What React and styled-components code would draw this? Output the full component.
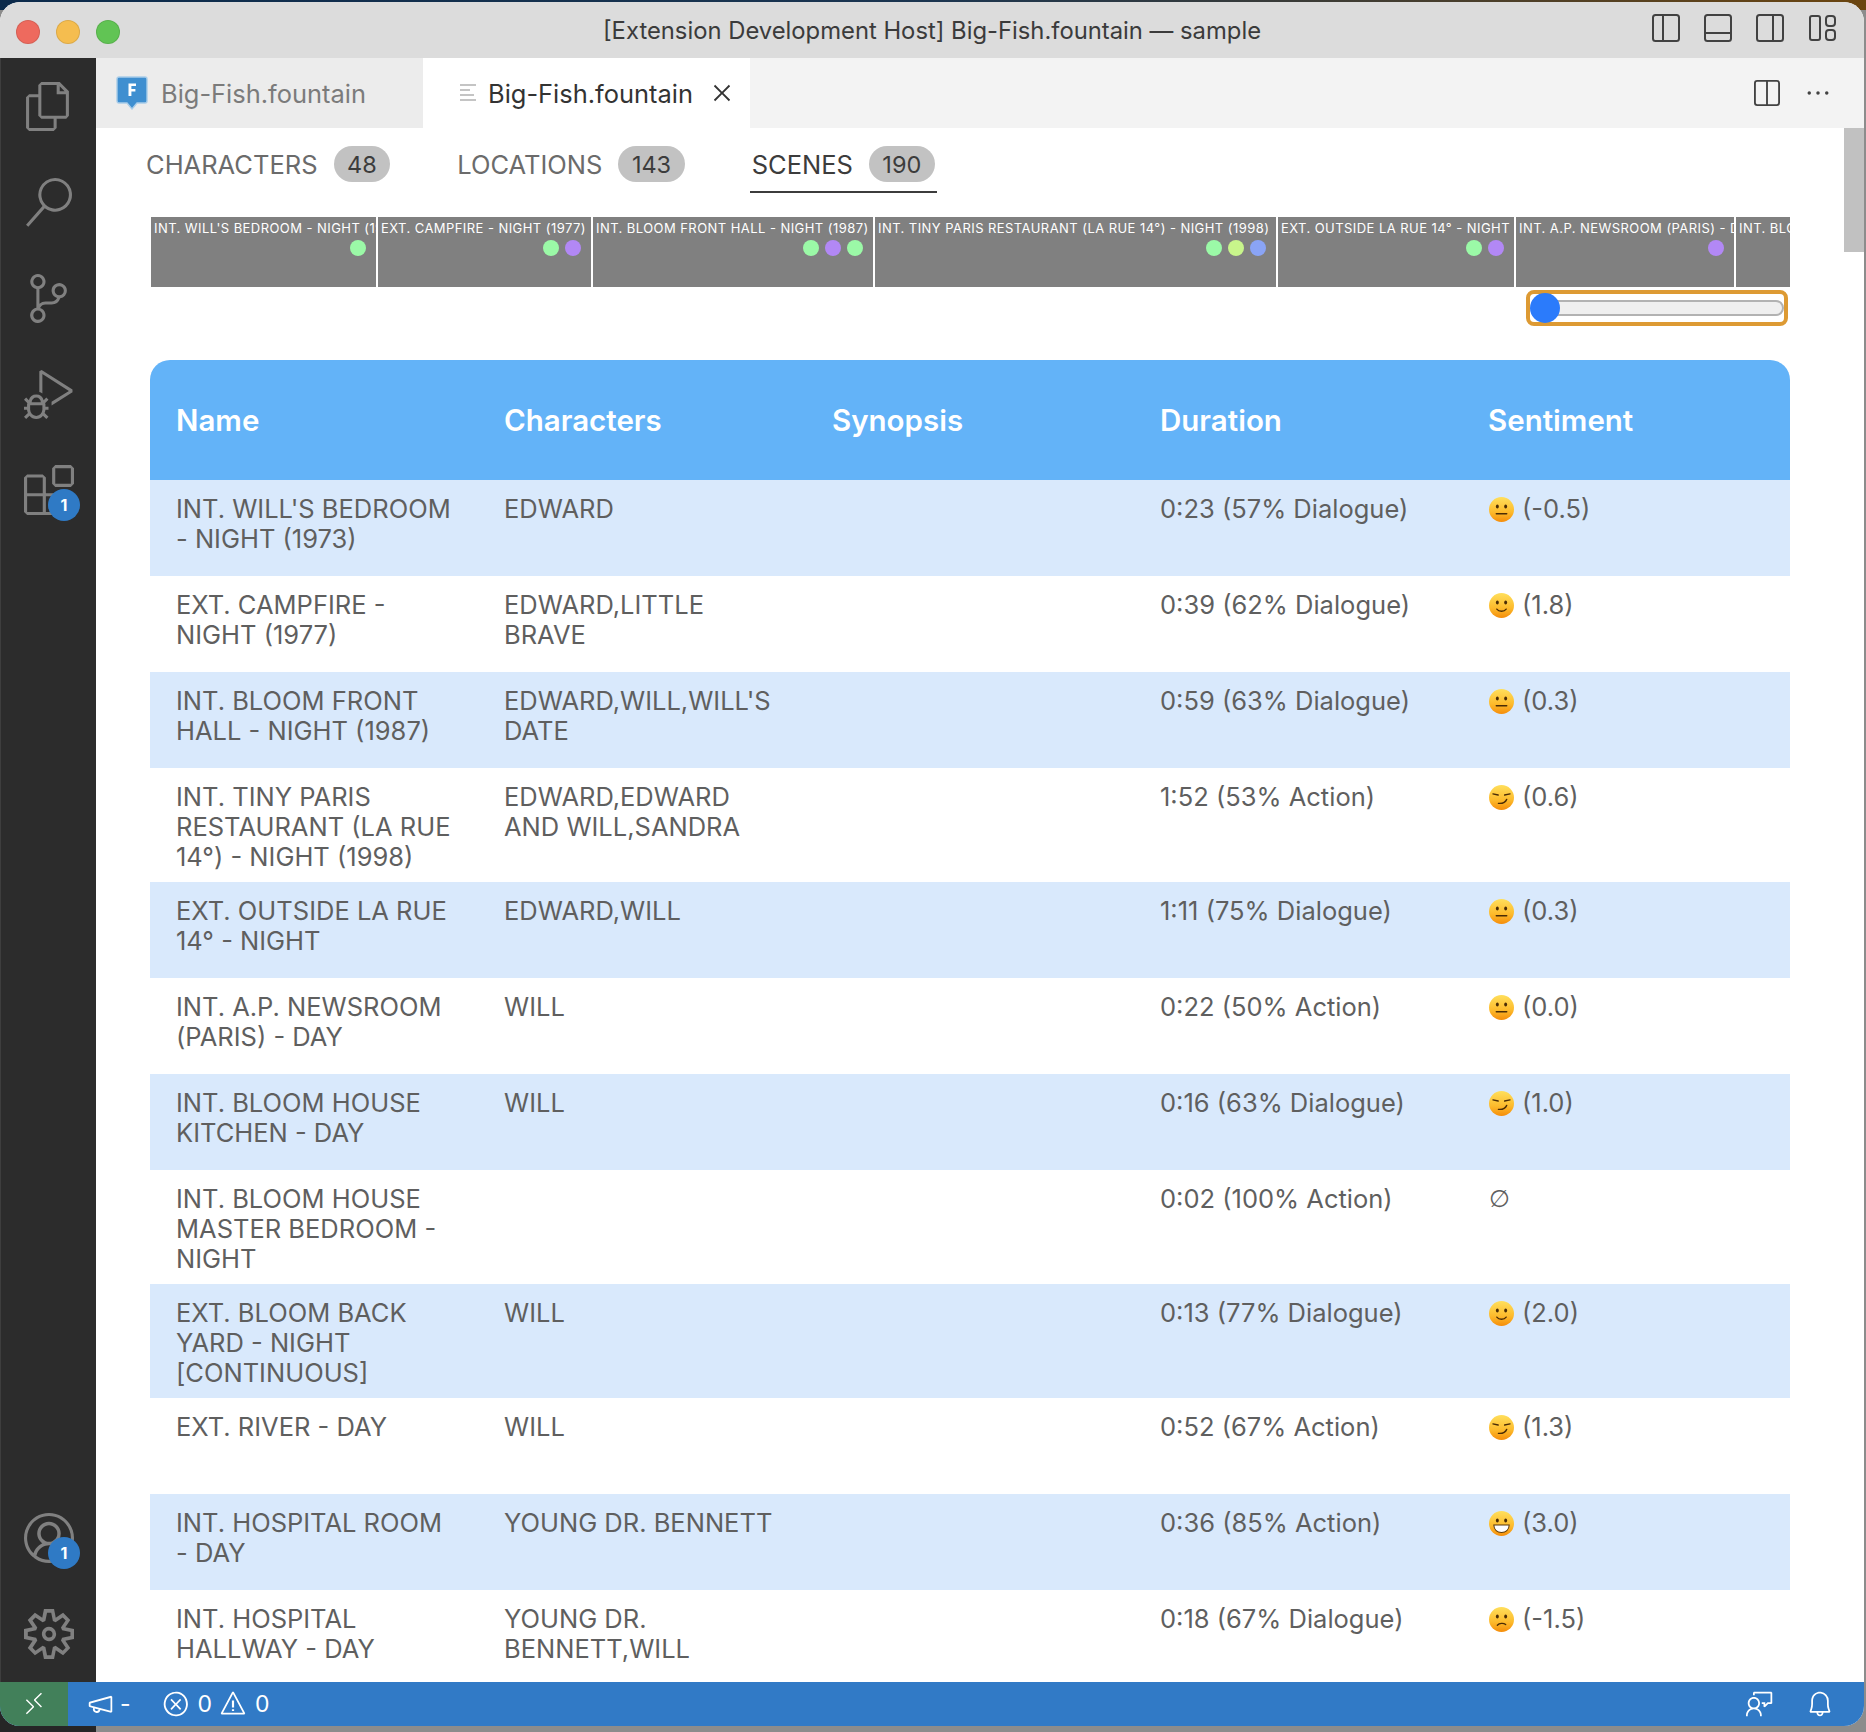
import React from "react";
import styled, { createGlobalStyle } from "styled-components";
import {
  VscFiles,
  VscSearch,
  VscSourceControl,
  VscDebugAlt,
  VscExtensions,
  VscAccount,
  VscSettingsGear,
  VscRemote,
  VscError,
  VscWarning,
  VscBell,
  VscFeedback,
  VscMegaphone,
  VscClose,
  VscEllipsis,
} from "react-icons/vsc";

const GlobalStyle = createGlobalStyle`
  html, body {
    margin: 0;
    padding: 0;
    background: #8c8c8c;
  }
  * {
    box-sizing: border-box;
  }
`;

const Desktop = styled.div`
  width: 1866px;
  height: 1732px;
  padding: 2px 2px 6px 0;
  overflow: hidden;
  font-family: Inter, "Liberation Sans", sans-serif;
  background:
    linear-gradient(90deg, #0b2a4b 0%, #1b3550 50%, #6b4510 100%) top / 100% 10px no-repeat,
    linear-gradient(90deg, #262626 0, #262626 96px, #8c8c8c 96px) bottom / 100% 30px no-repeat,
    #8c8c8c;
`;

const Window = styled.div`
  height: 100%;
  border-radius: 20px;
  overflow: hidden;
  display: flex;
  flex-direction: column;
  background: #fff;
`;

const TitleBar = styled.div`
  position: relative;
  flex: 0 0 56px;
  display: flex;
  align-items: center;
  justify-content: space-between;
  padding: 0 28px 0 16px;
  background: #dcdcdc;
`;

const Lights = styled.div`
  display: flex;
  gap: 16px;
  margin-top: 4px;
`;

const Light = styled.span`
  width: 24px;
  height: 24px;
  border-radius: 50%;
  background: ${(p) => p.$color};
  border: 1px solid rgba(0, 0, 0, 0.1);
`;

const Title = styled.div`
  position: absolute;
  left: 0;
  right: 0;
  text-align: center;
  font-size: 23.8px;
  color: #3b3b3b;
  pointer-events: none;
`;

const TitleIcons = styled.div`
  display: flex;
  gap: 24px;
  margin-top: -4px;
  color: #424242;
`;

const Workbench = styled.div`
  flex: 1;
  min-height: 0;
  display: flex;
`;

const ActivityBar = styled.div`
  flex: 0 0 96px;
  display: flex;
  flex-direction: column;
  justify-content: space-between;
  background: #2c2c2c;
  border-left: 1px solid #3e3e3e;
`;

const ActivityGroup = styled.div`
  display: flex;
  flex-direction: column;
`;

const ActivityItem = styled.div`
  position: relative;
  width: 95px;
  height: 96px;
  display: flex;
  align-items: center;
  justify-content: center;
  color: #808080;
`;

const Badge = styled.span`
  position: absolute;
  left: 47px;
  top: 47px;
  width: 32px;
  height: 32px;
  border-radius: 50%;
  display: flex;
  align-items: center;
  justify-content: center;
  background: #2f7ac5;
  color: #fff;
  font-size: 16px;
  font-weight: 700;
`;

const Editor = styled.div`
  flex: 1;
  min-width: 0;
  display: flex;
  flex-direction: column;
`;

const TabStrip = styled.div`
  flex: 0 0 70px;
  display: flex;
  align-items: center;
  background: #f3f3f3;
`;

const EditorTab = styled.div`
  width: 327px;
  height: 100%;
  display: flex;
  align-items: center;
  padding-left: ${(p) => (p.$active ? "37px" : "20px")};
  background: ${(p) => (p.$active ? "#fff" : "#ececec")};
  color: ${(p) => (p.$active ? "#333" : "#7b7b7b")};
  font-size: 25.45px;
`;

const TabLabel = styled.span`
  margin-left: ${(p) => p.$gap}px;
  padding-top: 1px;
`;

const TabClose = styled(VscClose)`
  display: block;
  margin-left: 14px;
`;

const TabActions = styled.div`
  margin-left: auto;
  display: flex;
  align-items: center;
  gap: 24px;
  padding-right: 32px;
  color: #424242;
`;

const Content = styled.div`
  position: relative;
  flex: 1;
  min-height: 0;
  overflow: hidden;
  padding: 0 74px 0 54px;
`;

const ScrollThumb = styled.div`
  position: absolute;
  top: 0;
  right: 0;
  width: 20px;
  height: 124px;
  background: #c1c1c1;
`;

const TabNav = styled.div`
  display: flex;
  margin-left: -6px;
  gap: 63px;
`;

const NavItem = styled.div`
  display: flex;
  align-items: center;
  gap: 16px;
  padding: 18px 2px 9px;
  border-bottom: 2px solid ${(p) => (p.$active ? "#3c3c3c" : "transparent")};
  color: ${(p) => (p.$active ? "#3c3c3c" : "#6b6b6b")};
  font-size: 25.5px;
`;

const Pill = styled.span`
  height: 36px;
  min-width: 56px;
  padding: 0 13.5px;
  border-radius: 18px;
  display: flex;
  align-items: center;
  justify-content: center;
  background: #c2c2c2;
  color: #3c3c3c;
  font-size: 23.5px;
`;

const Timeline = styled.div`
  margin-top: 24px;
  display: flex;
  gap: 2px;
  margin-left: 1px;
`;

const Segment = styled.div`
  flex: 0 0 ${(p) => p.$width}px;
  height: 70px;
  overflow: hidden;
  padding: 3px 0 0 3px;
  background: #808080;
`;

const SegmentLabel = styled.div`
  height: 17px;
  line-height: 17px;
  white-space: nowrap;
  overflow: hidden;
  color: #fff;
  font-size: 13px;
  letter-spacing: 0.44px;
`;

const Dots = styled.div`
  display: flex;
  justify-content: flex-end;
  gap: 6px;
  padding-right: 10px;
  margin-top: 3px;
`;

const Dot = styled.span`
  width: 16px;
  height: 16px;
  border-radius: 50%;
  background: ${(p) => p.$color};
`;

const SliderRow = styled.div`
  display: flex;
  justify-content: flex-end;
  margin-top: 3px;
  padding-right: 2px;
`;

const SliderFocus = styled.div`
  position: relative;
  width: 262px;
  height: 36px;
  padding: 6px 0 6px 4px;
  border: 4px solid #dd9a33;
  border-radius: 8px;
`;

const SliderTrack = styled.div`
  height: 100%;
  border: 2px solid #b2b2b2;
  border-radius: 9px;
  background: #efefef;
`;

const SliderThumb = styled.span`
  position: absolute;
  left: 0;
  top: -1px;
  width: 30px;
  height: 30px;
  border-radius: 50%;
  background: #2b7bfb;
`;

const Table = styled.table`
  width: 1640px;
  margin-top: 34px;
  border-collapse: collapse;
  table-layout: fixed;
`;

const HeadRow = styled.tr`
  height: 120px;
  background: #63b3f8;
`;

const HeadCell = styled.th`
  padding: 0 26px;
  text-align: left;
  color: #fff;
  font-size: 29.5px;
  font-weight: 600;

  &:first-child {
    border-top-left-radius: 20px;
  }
  &:last-child {
    border-top-right-radius: 20px;
  }
`;

const Row = styled.tr`
  height: 96px;
  background: ${(p) => (p.$striped ? "#d9e9fc" : "#fff")};
`;

const Cell = styled.td`
  padding: 14px 26px 10px;
  vertical-align: top;
  color: #5f5f5f;
  font-size: 25.5px;
  line-height: 30px;
`;

const Sentiment = styled.div`
  display: flex;
  align-items: center;
  gap: 8px;
  height: 30px;
  margin-left: 1px;
`;

const NoSentiment = styled.span`
  font-family: "DejaVu Sans", sans-serif;
  font-size: 24px;
  font-style: italic;
`;

const StatusBar = styled.div`
  flex: 0 0 44px;
  display: flex;
  align-items: center;
  background: #317ac6;
  color: #fff;
  font-size: 23px;
`;

const RemoteBox = styled.div`
  width: 68px;
  height: 100%;
  display: flex;
  align-items: center;
  justify-content: center;
  background: #42805a;
`;

const StatusItem = styled.div`
  display: flex;
  align-items: center;
  gap: ${(p) => p.$gap}px;
  margin-left: ${(p) => p.$left}px;
`;

const StatusRight = styled.div`
  margin-left: auto;
  display: flex;
  align-items: center;
  gap: 32px;
  padding-right: 30px;
`;

const PanelIcon = ({ kind, size = 28 }) => (
  <svg width={size} height={size} viewBox="0 0 28 28" fill="none" stroke="currentColor" strokeWidth="2">
    <rect x="1" y="1" width="26" height="26" rx="2.5" />
    {kind === "left" && <path d="M11 1V27" />}
    {kind === "right" && <path d="M17 1V27" />}
    {kind === "bottom" && <path d="M1 19H27" />}
    {kind === "split" && <path d="M14 1V27" />}
  </svg>
);

const CustomizeIcon = () => (
  <svg width="28" height="28" viewBox="0 0 28 28" fill="none" stroke="currentColor" strokeWidth="2">
    <rect x="2" y="2" width="10" height="24" rx="2" />
    <rect x="18" y="2" width="9" height="10" rx="3" />
    <rect x="18" y="16" width="9" height="10" rx="3" />
  </svg>
);

const FountainIcon = () => (
  <svg width="32" height="34" viewBox="0 0 32 34">
    <path d="M3 1H29a2 2 0 0 1 2 2V25a2 2 0 0 1-2 2H21L16 33L11 27H3a2 2 0 0 1-2-2V3a2 2 0 0 1 2-2Z" fill="#3f8fd0" stroke="#a9cde9" strokeWidth="1.4" />
    <path d="M12.5 7.5H20V10H15.4V13H19.4V15.5H15.4V20H12.5Z" fill="#fff" />
  </svg>
);

const OutlineIcon = () => (
  <svg width="16" height="28" viewBox="0 0 16 28" stroke="#c4c4c4" strokeWidth="2">
    <path d="M0 6H16M0 11H10M0 16H14M0 21H16" />
  </svg>
);

const Face = ({ kind, id }) => (
  <svg width="25" height="25" viewBox="0 0 24 24">
    <defs>
      <linearGradient id={id} x1="0" y1="0" x2="0" y2="1">
        <stop offset="0" stopColor="#ffdf5c" />
        <stop offset="0.6" stopColor="#fdbb2c" />
        <stop offset="1" stopColor="#f58d0a" />
      </linearGradient>
    </defs>
    <circle cx="12" cy="12" r="12" fill={`url(#${id})`} />
    {kind === "smirk" ? (
      <g fill="none" stroke="#4a2c05" strokeWidth="1.3" strokeLinecap="round">
        <path d="M3.8 8.6L8.8 9.6M15 9.6L20.2 8.6" />
        <path d="M9 17.6C13 18 15.8 16.6 17 13.8" />
      </g>
    ) : (
      <g fill="#4a2c05">
        <ellipse cx="8" cy="9.2" rx="1.4" ry="1.9" />
        <ellipse cx="16" cy="9.2" rx="1.4" ry="1.9" />
      </g>
    )}
    {kind === "neutral" && <path d="M7 16H17" stroke="#4a2c05" strokeWidth="1.4" strokeLinecap="round" />}
    {kind === "smile" && <path d="M7.5 15.5C9.5 18.2 14.5 18.2 16.5 15.5" fill="none" stroke="#4a2c05" strokeWidth="1.3" strokeLinecap="round" />}
    {kind === "frown" && <path d="M8 17.5C10 15.3 14 15.3 16 16.8" fill="none" stroke="#4a2c05" strokeWidth="1.3" strokeLinecap="round" />}
    {kind === "grin" && <path d="M4.6 13.5H19.4C19.2 18 16 20.6 12 20.6S4.8 18 4.6 13.5Z" fill="#fff" stroke="#5b3706" strokeWidth="1" />}
  </svg>
);

const GREEN = "#9bf9a7";
const PURPLE = "#b288f5";
const LIME = "#c8f58b";
const BLUE = "#8aa4f5";

const segments = [
  { width: 225, label: "INT. WILL'S BEDROOM - NIGHT (1973)", dots: [GREEN] },
  { width: 213, label: "EXT. CAMPFIRE - NIGHT (1977)", dots: [GREEN, PURPLE] },
  { width: 280, label: "INT. BLOOM FRONT HALL - NIGHT (1987)", dots: [GREEN, PURPLE, GREEN] },
  { width: 401, label: "INT. TINY PARIS RESTAURANT (LA RUE 14°) - NIGHT (1998)", dots: [GREEN, LIME, BLUE] },
  { width: 236, label: "EXT. OUTSIDE LA RUE 14° - NIGHT", dots: [GREEN, PURPLE] },
  { width: 218, label: "INT. A.P. NEWSROOM (PARIS) - DAY", dots: [PURPLE] },
  { width: 54, label: "INT. BLOOM HOUSE KITCHEN - DAY", dots: [] },
];

const scenes = [
  { name: "INT. WILL'S BEDROOM - NIGHT (1973)", chars: "EDWARD", time: "0:23 (57% Dialogue)", face: "neutral", score: "(-0.5)" },
  { name: "EXT. CAMPFIRE - NIGHT (1977)", chars: "EDWARD,LITTLE BRAVE", time: "0:39 (62% Dialogue)", face: "smile", score: "(1.8)" },
  { name: "INT. BLOOM FRONT HALL - NIGHT (1987)", chars: "EDWARD,WILL,WILL'S DATE", time: "0:59 (63% Dialogue)", face: "neutral", score: "(0.3)" },
  { name: "INT. TINY PARIS RESTAURANT (LA RUE 14°) - NIGHT (1998)", chars: "EDWARD,EDWARD AND WILL,SANDRA", time: "1:52 (53% Action)", face: "smirk", score: "(0.6)" },
  { name: "EXT. OUTSIDE LA RUE 14° - NIGHT", chars: "EDWARD,WILL", time: "1:11 (75% Dialogue)", face: "neutral", score: "(0.3)" },
  { name: "INT. A.P. NEWSROOM (PARIS) - DAY", chars: "WILL", time: "0:22 (50% Action)", face: "neutral", score: "(0.0)" },
  { name: "INT. BLOOM HOUSE KITCHEN - DAY", chars: "WILL", time: "0:16 (63% Dialogue)", face: "smirk", score: "(1.0)" },
  { name: "INT. BLOOM HOUSE MASTER BEDROOM - NIGHT", chars: "", time: "0:02 (100% Action)" },
  { name: "EXT. BLOOM BACK YARD - NIGHT [CONTINUOUS]", chars: "WILL", time: "0:13 (77% Dialogue)", face: "smile", score: "(2.0)" },
  { name: "EXT. RIVER - DAY", chars: "WILL", time: "0:52 (67% Action)", face: "smirk", score: "(1.3)" },
  { name: "INT. HOSPITAL ROOM - DAY", chars: "YOUNG DR. BENNETT", time: "0:36 (85% Action)", face: "grin", score: "(3.0)" },
  { name: "INT. HOSPITAL HALLWAY - DAY", chars: "YOUNG DR. BENNETT,WILL", time: "0:18 (67% Dialogue)", face: "frown", score: "(-1.5)" },
];

const App = () => {
  return (
    <>
      <GlobalStyle />
      <Desktop>
        <Window>
          <TitleBar>
            <Lights>
              <Light $color="#ee6a5e" />
              <Light $color="#f5bd4f" />
              <Light $color="#61c454" />
            </Lights>
            <Title>[Extension Development Host] Big-Fish.fountain — sample</Title>
            <TitleIcons>
              <PanelIcon kind="left" />
              <PanelIcon kind="bottom" />
              <PanelIcon kind="right" />
              <CustomizeIcon />
            </TitleIcons>
          </TitleBar>
          <Workbench>
            <ActivityBar>
              <ActivityGroup>
                <ActivityItem><VscFiles size={49} /></ActivityItem>
                <ActivityItem><VscSearch size={49} /></ActivityItem>
                <ActivityItem><VscSourceControl size={49} /></ActivityItem>
                <ActivityItem><VscDebugAlt size={49} /></ActivityItem>
                <ActivityItem>
                  <VscExtensions size={50} />
                  <Badge>1</Badge>
                </ActivityItem>
              </ActivityGroup>
              <ActivityGroup>
                <ActivityItem>
                  <VscAccount size={50} />
                  <Badge>1</Badge>
                </ActivityItem>
                <ActivityItem><VscSettingsGear size={50} /></ActivityItem>
              </ActivityGroup>
            </ActivityBar>
            <Editor>
              <TabStrip>
                <EditorTab>
                  <FountainIcon />
                  <TabLabel $gap={13}>Big-Fish.fountain</TabLabel>
                </EditorTab>
                <EditorTab $active>
                  <OutlineIcon />
                  <TabLabel $gap={12}>Big-Fish.fountain</TabLabel>
                  <TabClose size={30} />
                </EditorTab>
                <TabActions>
                  <PanelIcon kind="split" size={26} />
                  <VscEllipsis size={28} />
                </TabActions>
              </TabStrip>
              <Content>
                <ScrollThumb />
                <TabNav>
                  <NavItem>CHARACTERS <Pill>48</Pill></NavItem>
                  <NavItem>LOCATIONS <Pill>143</Pill></NavItem>
                  <NavItem $active>SCENES <Pill>190</Pill></NavItem>
                </TabNav>
                <Timeline>
                  {segments.map((s) => (
                    <Segment key={s.label} $width={s.width}>
                      <SegmentLabel>{s.label}</SegmentLabel>
                      <Dots>
                        {s.dots.map((c, i) => (
                          <Dot key={i} $color={c} />
                        ))}
                      </Dots>
                    </Segment>
                  ))}
                </Timeline>
                <SliderRow>
                  <SliderFocus>
                    <SliderTrack />
                    <SliderThumb />
                  </SliderFocus>
                </SliderRow>
                <Table>
                  <thead>
                    <HeadRow>
                      <HeadCell>Name</HeadCell>
                      <HeadCell>Characters</HeadCell>
                      <HeadCell>Synopsis</HeadCell>
                      <HeadCell>Duration</HeadCell>
                      <HeadCell>Sentiment</HeadCell>
                    </HeadRow>
                  </thead>
                  <tbody>
                    {scenes.map((s, i) => (
                      <Row key={s.name} $striped={i % 2 === 0}>
                        <Cell>{s.name}</Cell>
                        <Cell>{s.chars}</Cell>
                        <Cell />
                        <Cell>{s.time}</Cell>
                        <Cell>
                          <Sentiment>
                            {s.face ? (
                              <>
                                <Face kind={s.face} id={`face-${i}`} />
                                {s.score}
                              </>
                            ) : (
                              <NoSentiment>∅</NoSentiment>
                            )}
                          </Sentiment>
                        </Cell>
                      </Row>
                    ))}
                  </tbody>
                </Table>
              </Content>
            </Editor>
          </Workbench>
          <StatusBar>
            <RemoteBox><VscRemote size={26} /></RemoteBox>
            <StatusItem $left={18} $gap={6}>
              <VscMegaphone size={28} />-
            </StatusItem>
            <StatusItem $left={31} $gap={8}>
              <VscError size={28} />0
            </StatusItem>
            <StatusItem $left={7} $gap={8}>
              <VscWarning size={28} />0
            </StatusItem>
            <StatusRight>
              <VscFeedback size={28} />
              <VscBell size={28} />
            </StatusRight>
          </StatusBar>
        </Window>
      </Desktop>
    </>
  );
};

export default App;
